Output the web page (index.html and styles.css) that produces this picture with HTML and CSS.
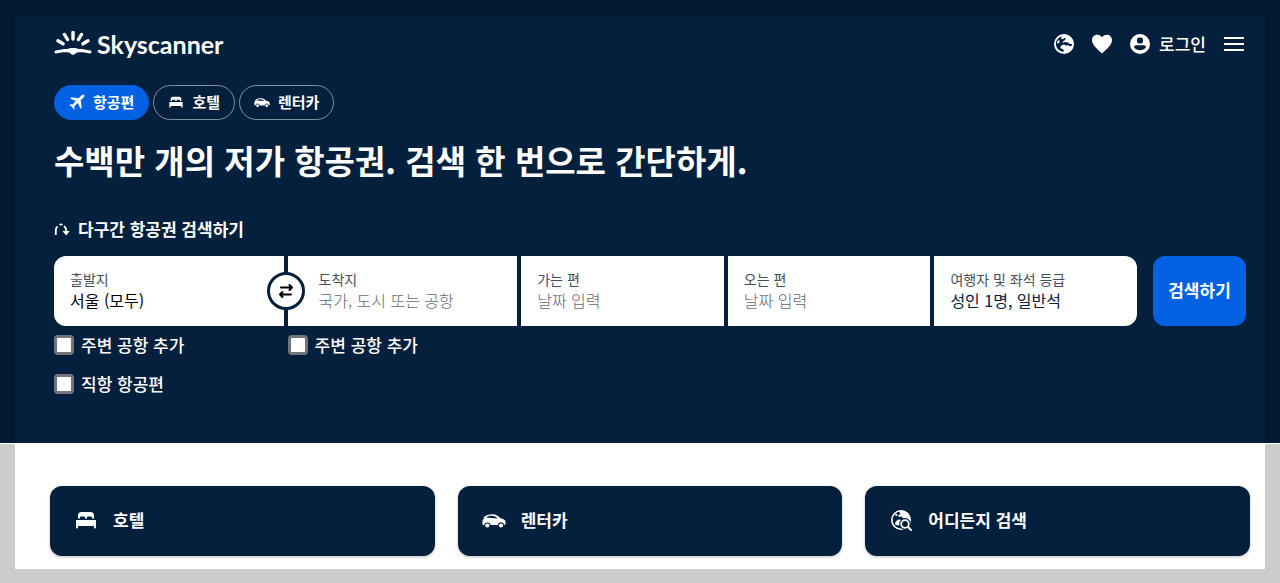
FILE: index.html
```
<!DOCTYPE html>
<html lang="ko">
<head>
    <meta charset="UTF-8">
    <meta name="viewport" content="width=device-width, initial-scale=1.0">
    <title>Skyscanner</title>
    <link rel="stylesheet" href="styles.css">
</head>
<body>
    <!-- Shared icons -->
    <svg class="sprite" aria-hidden="true">
        <symbol id="bed" viewBox="0 0 24 24">
            <path d="M4 10.500V7.500A3.500 3.500 0 0 1 7.500 4h9A3.500 3.500 0 0 1 20 7.500v3h-2V9.500a1 1 0 0 0-1-1h-3a1 1 0 0 0-1 1v1h-2v-1a1 1 0 0 0-1-1H7a1 1 0 0 0-1 1v1zM2 19.500V12h20v7.500a1 1 0 0 1-2 0V18H4v1.500a1 1 0 0 1-2 0z"/>
        </symbol>
        <symbol id="car" viewBox="0 0 24 24">
            <path fill-rule="evenodd" d="M1.200 17.200C.4 16 .2 14 .6 12.500c.3-1 .9-1.500 1.500-2.200l-.6-.8C4 7 7 6.200 10.500 6.300c3.500.1 6 1.800 8 4 2.500.4 5 1.200 5.200 4.200 0 1.500-.4 2.200-1.400 2.400a3.300 3.300 0 0 0-6.500.2H8.600a3.300 3.300 0 0 0-6.500.1zM4 9.600l11.500.8c-1.500-1.500-3.300-2.500-5.700-2.600C7.300 7.700 5.300 8.400 4 9.600z"/>
            <circle cx="5.300" cy="17.500" r="2.100"/>
            <circle cx="19" cy="17.500" r="2.100"/>
        </symbol>
    </svg>

    <div class="hero">
        <header class="header">
            <a class="logo" href="#">
                <svg width="38" height="26" viewBox="0 0 38 26" aria-hidden="true">
                    <g stroke="#fff" stroke-width="3.400" stroke-linecap="round">
                        <path d="M19 1.500v6.500M10.500 3.500l3 5M27.500 3.500l-3 5M4 9.800l5 3M34 9.800l-5 3"/>
                    </g>
                    <path fill="#fff" d="M1.500 19.600C7 18.200 11 17.800 13.500 18c2.500-1.200 8.500-1.200 11 0 2.500-.2 6.500.2 12 1.600 1.500.4 1.200 3.200-.6 2.900-4.500-1-8-1.400-11-1.200-2.600.2-3.300 1-4.300 1.900-.8.700-2.400.7-3.200 0-1-.9-1.700-1.700-4.300-1.900-3-.2-6.500.2-11 1.200-1.800.3-2.100-2.500-.6-2.900z"/>
                </svg>
                <span>Skyscanner</span>
            </a>
            <nav class="tools">
                <button class="icon-btn" aria-label="지역 설정">
                    <svg width="20" height="20" viewBox="0 0 20 20">
                        <circle cx="10" cy="10" r="10" fill="#fff"/>
                        <path fill="#05203c" d="M8.500 2.200c-.8.900-1.500 1.600-1.300 2.600l1.500.5 2-1.600L11.500 4l-.3 2-2 1.200-.9 1.500 3-.6 2.700.3 1.500 1.300 2 .3 1 1.500-2.500.7-1.800-1-2.200.2-2-.8-2 .5-1.700 1.600.4 1.800 2 .6 1.200 1.500-.4 1.200C5 17.300 1.900 14 1.900 9.800c0-3.800 2.700-6.800 6.600-7.600z"/>
                        <path fill="#fff" d="M3 8 4.500 6l1.300 1-.5 1.700L3.500 9.700z"/>
                    </svg>
                </button>
                <button class="icon-btn" aria-label="저장됨">
                    <svg width="20" height="20" viewBox="0 0 20 20"><path fill="#fff" d="M10 19.500C8 17.500 0 11.500 0 6.300 0 3 2.400.8 5.300.8c2 0 3.700 1 4.700 2.600C11 1.800 12.700.8 14.700.8 17.600.8 20 3 20 6.300c0 5.200-8 11.200-10 13.200z"/></svg>
                </button>
                <button class="login">
                    <svg width="20" height="20" viewBox="0 0 20 20" aria-hidden="true">
                        <circle cx="10" cy="10" r="10" fill="#fff"/>
                        <rect x="7" y="3.500" width="6" height="6" rx="2" fill="#05203c"/>
                        <path fill="#05203c" d="M4 13.300c0-1.300 1-2 2.300-2h7.400c1.300 0 2.300.7 2.300 2-1.200 2-3.500 3-6 3s-4.800-1-6-3z"/>
                    </svg>
                    로그인
                </button>
                <button class="icon-btn" aria-label="메뉴">
                    <svg width="20" height="20" viewBox="0 0 20 20"><path stroke="#fff" stroke-width="2" d="M0 4h20M0 10h20M0 16h20"/></svg>
                </button>
            </nav>
        </header>

        <nav class="tabs">
            <a class="tab active" href="#">
                <svg width="16" height="16" viewBox="0 0 16 16" aria-hidden="true"><path d="M15.200.9c.5.600.2 1.600-.5 2.300l-3 3 1 7.500-1.200 1.100-2.700-5.700-3.500 3.200.3 2.200-1 .9-1.500-2.600-2.600-1.500.9-1 2.200.3 3.200-3.500L1.100 4.400l1.100-1.200 7.500 1 3-2.900c.8-.8 1.900-1 2.500-.4z"/></svg>
                항공편
            </a>
            <a class="tab" href="#">
                <svg width="16" height="16" aria-hidden="true"><use href="#bed"/></svg>
                호텔
            </a>
            <a class="tab" href="#">
                <svg width="16" height="16" aria-hidden="true"><use href="#car"/></svg>
                렌터카
            </a>
        </nav>

        <h1>수백만 개의 저가 항공권. 검색 한 번으로 간단하게.</h1>

        <a class="multi-city" href="#">
            <svg width="16" height="16" viewBox="0 0 16 16" fill="none" aria-hidden="true">
                <path stroke="#fff" stroke-width="1.800" d="M1.800 14V9.500c0-1.700.6-3 1.600-4M5.500 3.700c1-.5 2-.5 3 0M10 5c1.500 1.200 2.300 2.800 2.300 5.500"/>
                <path fill="#fff" d="M8.500 10h7.200l-3.500 4.500z"/>
            </svg>
            다구간 항공권 검색하기
        </a>

        <!-- Search form -->
        <form class="search">
            <div class="fields">
                <div class="field first">
                    <label for="origin">출발지</label>
                    <input type="text" id="origin" value="서울 (모두)">
                    <button type="button" class="swap" aria-label="출발지와 도착지 바꾸기">
                        <svg width="16" height="16" viewBox="0 0 16 16" fill="none" stroke="#000" stroke-width="2" stroke-linecap="round" stroke-linejoin="round"><path d="M3 4.500h11M11.500 2l2.500 2.500L11.500 7M13 11.500H2M4.500 9L2 11.500 4.500 14"/></svg>
                    </button>
                </div>
                <div class="field destination">
                    <label for="destination">도착지</label>
                    <input type="text" id="destination" placeholder="국가, 도시 또는 공항">
                </div>
                <button type="button" class="field">
                    <span class="label">가는 편</span>
                    <span class="value empty">날짜 입력</span>
                </button>
                <button type="button" class="field">
                    <span class="label">오는 편</span>
                    <span class="value empty">날짜 입력</span>
                </button>
                <button type="button" class="field last">
                    <span class="label">여행자 및 좌석 등급</span>
                    <span class="value">성인 1명, 일반석</span>
                </button>
                <label class="check"><input type="checkbox"> 주변 공항 추가</label>
                <label class="check"><input type="checkbox"> 주변 공항 추가</label>
                <label class="check direct"><input type="checkbox"> 직항 항공편</label>
            </div>
            <button type="submit" class="submit">검색하기</button>
        </form>
    </div>

    <main class="services">
        <a class="card" href="#">
            <svg width="24" height="24" aria-hidden="true"><use href="#bed"/></svg>
            호텔
        </a>
        <a class="card" href="#">
            <svg width="24" height="24" aria-hidden="true"><use href="#car"/></svg>
            렌터카
        </a>
        <a class="card" href="#">
            <svg width="24" height="24" viewBox="0 0 24 24" aria-hidden="true">
                <circle cx="12" cy="12" r="9.200" fill="none" stroke="#fff" stroke-width="1.600"/>
                <path d="M10 3.500 12 2.500c5 0 9 3.500 9.700 8.500l-1.200 1.500a6 6 0 0 0-6.500-2.300l-1.500-1.700-2.500.5-1-1.500 2.500-1.500zM6 6.500l2-1 .5 1.500L7 8.500zM6.500 14l2.500-2.500 3 .3-.5 2.200-.5 3-2 .5-3-1z"/>
                <circle cx="16" cy="16" r="5.800" fill="#05203c"/>
                <circle cx="16" cy="16" r="3.800" fill="none" stroke="#fff" stroke-width="1.800"/>
                <path stroke="#05203c" stroke-width="5" d="M20 20l3 3"/>
                <path stroke="#fff" stroke-width="2" stroke-linecap="round" d="M19 19l3 3"/>
            </svg>
            어디든지 검색
        </a>
    </main>
</body>
</html>
```
FILE: styles.css
```
* {
    box-sizing: border-box;
}

body {
    margin: 0;
    background: #fff;
    color: #fff;
    font-family: "Noto Sans CJK KR", sans-serif;
    font-size: 17px;
    line-height: 24px;
}

a {
    color: inherit;
    text-decoration: none;
}

button,
input {
    font: inherit;
    color: inherit;
}

button {
    border: none;
    padding: 0;
    background: none;
    cursor: pointer;
}

svg {
    display: block;
    flex: none;
}

.sprite {
    position: absolute;
    width: 0;
    height: 0;
}

/* Top area, the translucent border shades the edges of the page */
.hero {
    background: #05203c;
    border: 15px solid rgba(0, 0, 0, 0.2);
    border-bottom: none;
    padding: 12px 19px 47px 39px;
    margin-bottom: 1px;
}

.header {
    display: flex;
    justify-content: space-between;
    align-items: center;
    height: 34px;
}

.logo {
    display: flex;
    align-items: center;
    gap: 5px;
    font-family: Lato, sans-serif;
    font-size: 25px;
    font-weight: 700;
}

.tools {
    display: flex;
    align-items: center;
    gap: 18px;
    padding-right: 2px;
}

.login {
    display: flex;
    align-items: center;
    gap: 9px;
    font-weight: 500;
}

/* Category tabs */
.tabs {
    display: flex;
    gap: 4px;
    margin-top: 24px;
}

.tab {
    display: flex;
    align-items: center;
    gap: 8px;
    height: 35px;
    padding: 0 14px 1px;
    border: 1px solid #838f9d;
    border-radius: 18px;
    font-size: 15px;
    font-weight: 700;
}

.tab svg,
.card svg {
    fill: #fff;
}

.tab.active {
    background: #0062e3;
    border-color: #0062e3;
}

h1 {
    margin: 19px 0 36px;
    font-size: 33px;
    line-height: 42px;
    font-weight: 700;
}

.multi-city {
    display: inline-flex;
    align-items: center;
    gap: 8px;
    font-weight: 700;
}

/* Search form */
.search {
    display: flex;
    align-items: flex-start;
    gap: 16px;
    margin-top: 14px;
}

.fields {
    flex: 1;
    display: grid;
    grid-template-columns: 17fr 17fr 15fr 15fr 15fr;
    column-gap: 4px;
}

.field {
    position: relative;
    display: flex;
    flex-direction: column;
    justify-content: center;
    height: 70px;
    min-width: 0;
    padding: 0 16px 3px;
    background: #fff;
    color: #05203c;
    text-align: left;
}

.field.first {
    border-radius: 12px 0 0 12px;
}

.field.last {
    border-radius: 0 12px 12px 0;
}

.field.destination {
    padding-left: 31px;
}

.field label,
.field .label {
    color: #454f5c;
    font-size: 14px;
    line-height: 20px;
}

.field input,
.field .value {
    width: 100%;
    height: 22px;
    padding: 0;
    border: none;
    outline: none;
    background: none;
    font-size: 16px;
    line-height: 22px;
}

.field input {
    color: #000;
}

.field input::placeholder,
.field .value.empty {
    color: #626971;
    font-weight: 300;
    opacity: 1;
}

.swap {
    position: absolute;
    top: 16px;
    right: -21px;
    z-index: 1;
    display: flex;
    align-items: center;
    justify-content: center;
    width: 38px;
    height: 38px;
    background: #fff;
    border: 3px solid #05203c;
    border-radius: 50%;
}

.submit {
    width: 93px;
    height: 70px;
    padding-bottom: 2px;
    border-radius: 12px;
    background: #0062e3;
    font-weight: 700;
}

.check {
    display: flex;
    align-items: center;
    gap: 7px;
    margin-top: 7px;
    font-weight: 500;
}

.check.direct {
    grid-column: 1 / -1;
    margin-top: 15px;
}

.check input {
    appearance: none;
    width: 20px;
    height: 20px;
    margin: 0;
    border: 3px solid #70757b;
    border-radius: 4px;
    background: #fff;
}

.check input:checked {
    background: #0062e3;
}

/* Links to other services */
.services {
    display: grid;
    grid-template-columns: repeat(3, 1fr);
    gap: 23px;
    padding: 42px 15px 13px 35px;
    border: 15px solid rgba(0, 0, 0, 0.2);
    border-top: none;
}

.card {
    display: flex;
    align-items: center;
    gap: 15px;
    height: 70px;
    padding: 0 24px 2px;
    border-radius: 12px;
    background: #05203c;
    box-shadow: 0 1px 3px rgba(37, 32, 31, 0.3);
    font-weight: 700;
}
```
